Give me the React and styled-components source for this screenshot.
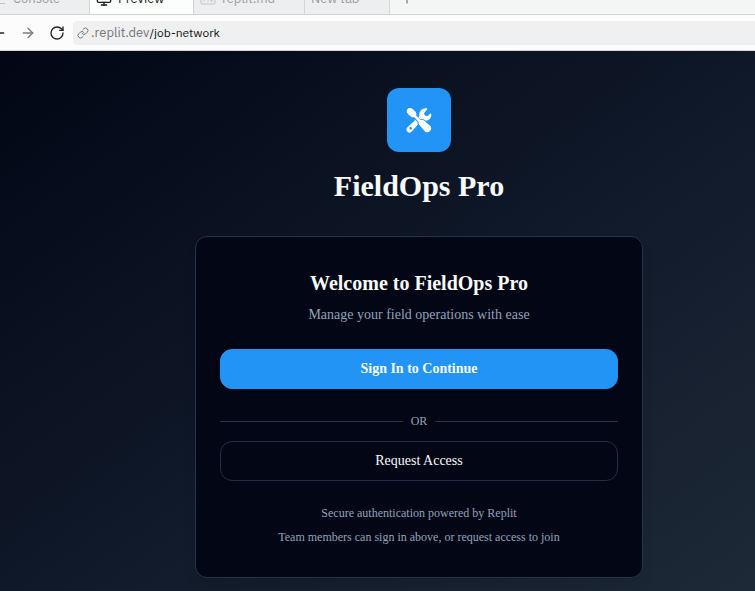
import React from 'react';
import styled, { createGlobalStyle } from 'styled-components';
import { ArrowLeft, ArrowRight, RotateCw, Link, Monitor, Plus } from 'lucide-react';

const GlobalStyle = createGlobalStyle`
  * { box-sizing: border-box; }
  body { margin: 0; background: #020617; }
  h1, h2, p { margin: 0; }
  button { font: inherit; cursor: pointer; }
`;

const Window = styled.div`
  display: flex;
  flex-direction: column;
  min-height: 100vh;
  overflow: hidden;
`;

const TabBar = styled.nav`
  display: flex;
  align-items: flex-end;
  height: 15px;
  overflow: hidden;
  background: #f4f6f6;
  border-bottom: 1px solid #cfd2d3;
  font-family: 'IBM Plex Sans', 'Noto Sans', sans-serif;
`;

const Tab = styled.button`
  display: flex;
  flex: none;
  align-items: center;
  gap: 6px;
  width: ${(p) => p.$width}px;
  height: ${(p) => (p.$active ? 31 : 30)}px;
  padding: 0 6px;
  border: 0;
  border-right: 1px solid #d3d5d7;
  background: ${(p) => (p.$active ? '#fcfdfd' : '#edeef0')};
  color: ${(p) => (p.$active ? '#17191c' : '#9a9da1')};
  font-size: 13px;
  line-height: 16px;
  white-space: nowrap;
`;

const ConsoleTab = styled(Tab)`
  padding-left: 0;
  gap: 8px;
`;

const AddTab = styled.button`
  display: flex;
  align-items: center;
  height: 30px;
  padding: 0 10px;
  border: 0;
  background: transparent;
  color: #6e7276;
`;

const Toolbar = styled.div`
  display: flex;
  align-items: center;
  height: 36px;
  overflow: hidden;
  background: #fcfcfc;
  border-bottom: 1px solid #d5d5d5;
`;

const NavButtons = styled.div`
  display: flex;
  flex: none;
  gap: 13px;
  width: 73px;
  justify-content: flex-end;
  padding-right: 8px;
`;

const NavButton = styled.button`
  display: flex;
  flex: none;
  align-items: center;
  padding: 0;
  border: 0;
  background: transparent;
  color: ${(p) => (p.$muted ? '#77797c' : '#222426')};
`;

const AddressBar = styled.div`
  display: flex;
  flex: 1;
  align-items: center;
  gap: 2px;
  height: 24px;
  padding-left: 4px;
  border-radius: 4px 0 0 4px;
  background: #eff0f2;
  color: #74777b;
  font-family: 'IBM Plex Sans', 'Noto Sans', sans-serif;
  font-size: 13px;
  line-height: 20px;
`;

const Path = styled.span`
  color: #101214;
  font-size: 12px;
`;

const Page = styled.main`
  display: flex;
  flex: 1;
  flex-direction: column;
  align-items: center;
  padding: 37px 0 13px 83px;
  background: linear-gradient(to bottom right, #020615, #0f1828 50%, #1e2938);
  color: #f8fafc;
  font-family: 'Liberation Serif', 'Times New Roman', serif;
`;

const Logo = styled.div`
  display: flex;
  align-items: center;
  justify-content: center;
  width: 64px;
  height: 64px;
  border-radius: 12px;
  background: #2294f5;
  color: #fff;
`;

const Title = styled.h1`
  margin-top: 16px;
  font-size: 30px;
  line-height: 36px;
`;

const Card = styled.section`
  display: flex;
  flex-direction: column;
  width: 100%;
  max-width: 448px;
  margin-top: 32px;
  padding: 32px 24px;
  border: 1px solid #263349;
  border-radius: 12px;
  background: #020615;
  box-shadow: 0 10px 15px -3px rgba(0, 0, 0, 0.1);
  text-align: center;
`;

const Heading = styled.h2`
  font-size: 20px;
  line-height: 28px;
`;

const Subtitle = styled.p`
  margin-top: 8px;
  color: #94a3b8;
  font-size: 14px;
  line-height: 20px;
`;

const Action = styled.button`
  height: 40px;
  border: 1px solid ${(p) => (p.$primary ? '#2294f5' : '#222e42')};
  border-radius: 12px;
  background: ${(p) => (p.$primary ? '#2294f5' : 'transparent')};
  color: #f8fafc;
  font-size: 14px;
  font-weight: ${(p) => (p.$primary ? 700 : 400)};
  line-height: 20px;
`;

const Actions = styled.div`
  display: flex;
  flex-direction: column;
  margin-top: 24px;
`;

const Divider = styled.div`
  display: flex;
  align-items: center;
  gap: 8px;
  margin: 24px 0 12px;
  color: #94a3b8;
  font-size: 12px;
  line-height: 16px;
  &::before,
  &::after {
    content: '';
    flex: 1;
    height: 1px;
    background: #263349;
  }
`;

const Notes = styled.div`
  display: flex;
  flex-direction: column;
  gap: 8px;
  margin-top: 24px;
  color: #94a3b8;
  font-size: 12px;
  line-height: 16px;
`;

function ToolsIcon() {
  return (
    <svg width="26" height="26" viewBox="0 0 78 78" fill="currentColor" aria-hidden="true">
      <path d="M11 3C6 3 2 8 2 13c0 4 3 7 6 10l8 7c3 2 6 0 9 1l13 14c-1 3 0 7 3 10l14 16c5 6 12 6 17 1s5-11 0-16L56 42c-4-4-8-5-12-3L31 26c0-4 1-7-2-11L20 6c-3-2-5-3-9-3Z" />
      <path d="M40 28c-2-8 2-18 10-22 4-2 8-3 12-2 2 1 2 3 0 5l-7 8c-2 4 2 10 7 10 3 0 5-2 7-4l3-3c2-1 4 0 4 3 0 10-7 17-17 18-5-5-11-6-16-4L37 31l3-3Z" />
      <path fillRule="evenodd" d="M25 42 5 60c-5 5-5 10-1 14s10 4 14-1l17-20c-1-3-1-5 0-7L26 37v5ZM14 60a4 4 0 1 1 0 8 4 4 0 0 1 0-8Z" />
    </svg>
  );
}

function PromptIcon() {
  return (
    <svg width="5" height="14" viewBox="0 0 5 14" aria-hidden="true">
      <path d="M0 11.5h5" stroke="#c9c0ac" />
    </svg>
  );
}

function MarkdownIcon() {
  return (
    <svg width="16" height="12" viewBox="0 0 16 12" fill="none" stroke="#cfd1d4" aria-hidden="true">
      <rect x="1" y="1" width="14" height="10" rx="2" strokeWidth="1.5" />
      <path d="M4 9V5l2 2 2-2v4M11.5 4v5m-1.5-2 1.5 2 1.5-2" />
    </svg>
  );
}

export default function App() {
  return (
    <Window>
      <GlobalStyle />
      <TabBar aria-label="Tabs">
        <ConsoleTab $width={90}>
          <PromptIcon />
          Console
        </ConsoleTab>
        <Tab $width={104} $active>
          <Monitor size={16} />
          Preview
        </Tab>
        <Tab $width={111}>
          <MarkdownIcon />
          replit.md
        </Tab>
        <Tab $width={85}>New tab</Tab>
        <AddTab aria-label="Add tab"><Plus size={14} /></AddTab>
      </TabBar>
      <Toolbar>
        <NavButtons>
          <NavButton aria-label="Back"><ArrowLeft size={16} strokeWidth={2} /></NavButton>
          <NavButton $muted aria-label="Forward"><ArrowRight size={16} /></NavButton>
          <NavButton aria-label="Reload"><RotateCw size={16} /></NavButton>
        </NavButtons>
        <AddressBar>
          <Link size={12} />
          <span>.replit.dev<Path>/job-network</Path></span>
        </AddressBar>
      </Toolbar>
      <Page>
        <Logo><ToolsIcon /></Logo>
        <Title>FieldOps Pro</Title>
        <Card>
          <Heading>Welcome to FieldOps Pro</Heading>
          <Subtitle>Manage your field operations with ease</Subtitle>
          <Actions>
            <Action $primary>Sign In to Continue</Action>
            <Divider>OR</Divider>
            <Action>Request Access</Action>
          </Actions>
          <Notes>
            <p>Secure authentication powered by Replit</p>
            <p>Team members can sign in above, or request access to join</p>
          </Notes>
        </Card>
      </Page>
    </Window>
  );
}
